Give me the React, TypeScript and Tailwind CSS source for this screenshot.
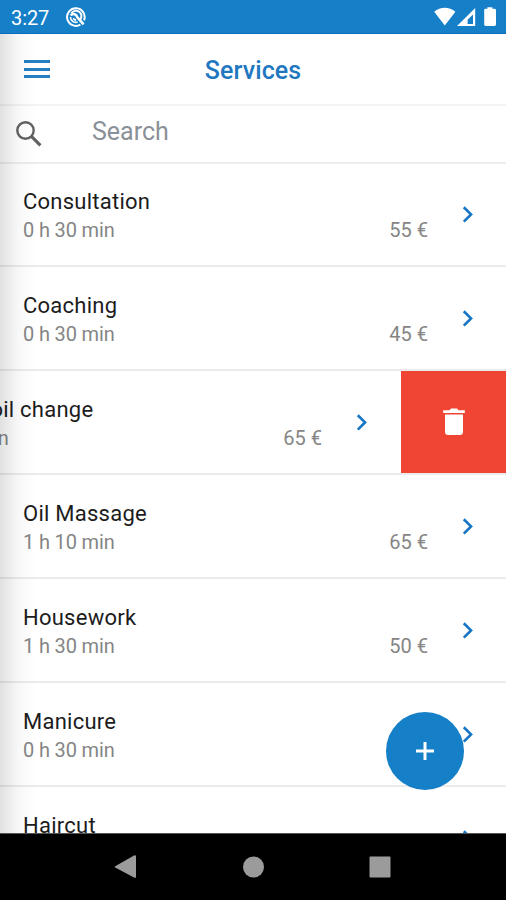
import clsx from 'clsx';

type Service = {
  name: string;
  duration: string;
  price: string;
  swiped?: boolean;
};

const services: Service[] = [
  { name: 'Consultation', duration: '0 h 30 min', price: '55 €' },
  { name: 'Coaching', duration: '0 h 30 min', price: '45 €' },
  { name: 'Engine oil change', duration: '1 h 00 min', price: '65 €', swiped: true },
  { name: 'Oil Massage', duration: '1 h 10 min', price: '65 €' },
  { name: 'Housework', duration: '1 h 30 min', price: '50 €' },
  { name: 'Manicure', duration: '0 h 30 min', price: '50 €' },
  { name: 'Haircut', duration: '0 h 30 min', price: '30 €' },
];

function StatusBar() {
  return (
    <div className="h-[34px] shrink-0 bg-[#157fc8] border-b border-[#0a6dbd] flex items-center pl-[11px] pr-2 text-white">
      <span className="text-[20px] leading-none w-[54px] pt-[2px] tracking-[-0.1px]">3:27</span>
      <svg width="22" height="22" viewBox="0 0 22 22" fill="none" stroke="white">
        <path d="M15.4 18.6A8.8 8.8 0 1 1 19 14.4" strokeWidth="2" />
        <path d="M6.4 7.4A5.4 5.4 0 1 1 15.2 13.6" strokeWidth="2" />
        <path d="M5.4 11A5.4 5.4 0 0 0 12.6 16" strokeWidth="1.6" />
        <path d="M5.6 9.4C8.4 6.8 11.4 8.2 12.2 11L18.6 18.4" strokeWidth="2.6" />
        <path d="M8 12.4L11 14.4" strokeWidth="1.8" />
      </svg>
      <svg className="ml-auto" width="64" height="22" viewBox="0 0 64 22" fill="white">
        <path d="M0.2 5.8C6.5 .4 15 .4 21.4 5.8L10.8 19.4Z" />
        <path fillRule="evenodd" d="M41.2 2V20H23ZM39 8.4V18H33.6V13.8Z" />
        <path d="M53.4 1.2H58.4V2.8H60.4Q62 2.8 62 4.2V18.6Q62 20 60.6 20H51.6Q50.2 20 50.2 18.6V4.2Q50.2 2.8 51.6 2.8H53.4Z" />
      </svg>
    </div>
  );
}

function Header() {
  return (
    <header className="h-[72px] shrink-0 border-b-2 border-[#f3f3f3] grid grid-cols-[1fr_auto_1fr] items-center px-6">
      <button className="flex flex-col gap-[4.5px] w-[26px]">
        <span className="h-[3px] bg-[#2480c3]" />
        <span className="h-[3px] bg-[#2480c3]" />
        <span className="h-[3px] bg-[#2480c3]" />
      </button>
      <h1 className="text-[25px] leading-none font-medium tracking-[0.1px] text-[#1f78bf] pt-[3px]">Services</h1>
    </header>
  );
}

function SearchBar() {
  return (
    <div className="h-[58px] shrink-0 border-b-2 border-[#ededed] flex items-center pl-[15px]">
      <svg className="w-[77px]" height="28" viewBox="0 0 77 28" fill="none" stroke="#616161">
        <circle cx="10.5" cy="10.5" r="8.2" strokeWidth="2.4" />
        <path d="M16.4 16.4L25.4 25.4" strokeWidth="3.2" />
      </svg>
      <span className="text-[25px] leading-none text-[#8a9097] pb-[6px]">Search</span>
    </div>
  );
}

function ServiceRow({ service }: { service: Service }) {
  return (
    <div className="h-[104px] shrink-0 border-b-2 border-[#ebebeb] overflow-hidden">
      <div className={clsx('flex h-full', service.swiped && '-translate-x-[106px]')}>
        <div className="w-[506px] shrink-0 flex items-center pl-[23px]">
          <div className="flex-1 pt-1">
            <div className="text-[22px] leading-[28px] tracking-[0.25px] text-[#1c1c1c]">{service.name}</div>
            <div className="flex justify-between text-[20px] leading-[28px] tracking-[-0.15px] text-[#858585]">
              <span>{service.duration}</span>
              <span className="tracking-normal">{service.price}</span>
            </div>
          </div>
          <svg className="ml-[34px] mr-8" width="12" height="18" viewBox="0 0 12 18" fill="none" stroke="#1877c4">
            <path d="M1.8 2.2L9 9.4L1.8 16.6" strokeWidth="2.7" />
          </svg>
        </div>
        {service.swiped && (
          <button className="w-[105px] ml-px shrink-0 bg-[#f04534] flex items-center justify-center">
            <svg width="22" height="28" viewBox="0 0 22 28" fill="white">
              <path d="M0.2 2.2H6.5L8 0.6H14L15.5 2.2H21.8V5H0.2Z" />
              <path d="M2 6.4H20V24Q20 27 17 27H5Q2 27 2 24Z" />
            </svg>
          </button>
        )}
      </div>
    </div>
  );
}

function NavBar() {
  return (
    <nav className="h-[67px] shrink-0 bg-black border-t border-[#555] flex items-center justify-center">
      <svg width="278" height="26" viewBox="0 0 278 26" fill="#9b9b9b">
        <path d="M1.2 12.2L20 1.4Q22 .6 22 2.4V22.8Q22 24.6 20 23.6L1.2 13.6Q0 13 1.2 12.2Z" />
        <circle cx="139.5" cy="13" r="10.5" />
        <rect x="255.5" y="2.5" width="21" height="21" rx="1" />
      </svg>
    </nav>
  );
}

export default function App() {
  return (
    <div className="w-[506px] h-[900px] flex flex-col bg-white overflow-hidden font-['Roboto',sans-serif]">
      <StatusBar />
      <main className="relative flex-1 min-h-0 flex flex-col overflow-hidden">
        <Header />
        <SearchBar />
        <div className="-mt-px flex flex-col">
          {services.map((service) => (
            <ServiceRow key={service.name} service={service} />
          ))}
        </div>

        {/* edge shadow of the closed drawer */}
        <div className="absolute inset-y-0 left-0 w-9 bg-gradient-to-r from-black/12 via-black/3 to-transparent" />

        <button className="absolute left-[386px] bottom-[43px] size-[78px] rounded-full bg-[#157fc8] flex items-center justify-center">
          <svg width="18" height="18" viewBox="0 0 18 18" stroke="white" strokeWidth="3">
            <path d="M9 0V18M0 9H18" />
          </svg>
        </button>
      </main>
      <NavBar />
    </div>
  );
}
